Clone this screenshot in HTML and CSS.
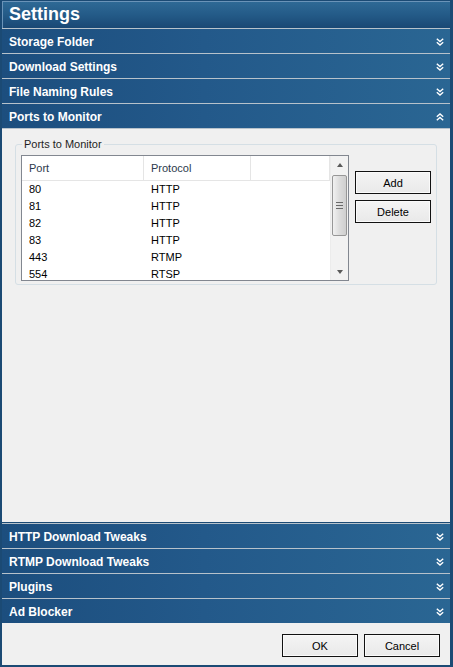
FILE: index.html
```html
<!DOCTYPE html>
<html lang="en">
<head>
    <meta charset="UTF-8">
    <title>Settings</title>
    <link rel="stylesheet" href="styles.css">
</head>
<body>
    <div class="window">
        <div class="titlebar">Settings</div>

        <div class="section">
            <span>Storage Folder</span>
            <svg class="chev" width="8" height="8" viewBox="0 0 8 8"><polyline points="0.8,0.8 4,3.6 7.2,0.8"/><polyline points="0.8,4.2 4,7 7.2,4.2"/></svg>
        </div>
        <div class="section">
            <span>Download Settings</span>
            <svg class="chev" width="8" height="8" viewBox="0 0 8 8"><polyline points="0.8,0.8 4,3.6 7.2,0.8"/><polyline points="0.8,4.2 4,7 7.2,4.2"/></svg>
        </div>
        <div class="section">
            <span>File Naming Rules</span>
            <svg class="chev" width="8" height="8" viewBox="0 0 8 8"><polyline points="0.8,0.8 4,3.6 7.2,0.8"/><polyline points="0.8,4.2 4,7 7.2,4.2"/></svg>
        </div>
        <div class="section">
            <span>Ports to Monitor</span>
            <svg class="chev" width="8" height="8" viewBox="0 0 8 8"><polyline points="0.8,3.8 4,1 7.2,3.8"/><polyline points="0.8,7.2 4,4.4 7.2,7.2"/></svg>
        </div>

        <div class="panel">
            <fieldset class="group">
                <legend>Ports to Monitor</legend>
                <div class="group-body">
                    <div class="listview">
                        <div class="lv-main">
                            <div class="lv-head">
                                <span class="col-port">Port</span>
                                <span class="col-proto">Protocol</span>
                                <span class="col-rest"></span>
                            </div>
                            <div class="lv-row"><span class="col-port">80</span><span class="col-proto">HTTP</span></div>
                            <div class="lv-row"><span class="col-port">81</span><span class="col-proto">HTTP</span></div>
                            <div class="lv-row"><span class="col-port">82</span><span class="col-proto">HTTP</span></div>
                            <div class="lv-row"><span class="col-port">83</span><span class="col-proto">HTTP</span></div>
                            <div class="lv-row"><span class="col-port">443</span><span class="col-proto">RTMP</span></div>
                            <div class="lv-row"><span class="col-port">554</span><span class="col-proto">RTSP</span></div>
                        </div>
                        <div class="vscroll">
                            <div class="arrow"><span class="tri-up"></span></div>
                            <div class="track">
                                <div class="thumb"><span class="grip"></span></div>
                            </div>
                            <div class="arrow"><span class="tri-down"></span></div>
                        </div>
                    </div>
                    <div class="side-buttons">
                        <button class="btn">Add</button>
                        <button class="btn">Delete</button>
                    </div>
                </div>
            </fieldset>
        </div>

        <div class="section first-bottom">
            <span>HTTP Download Tweaks</span>
            <svg class="chev" width="8" height="8" viewBox="0 0 8 8"><polyline points="0.8,0.8 4,3.6 7.2,0.8"/><polyline points="0.8,4.2 4,7 7.2,4.2"/></svg>
        </div>
        <div class="section">
            <span>RTMP Download Tweaks</span>
            <svg class="chev" width="8" height="8" viewBox="0 0 8 8"><polyline points="0.8,0.8 4,3.6 7.2,0.8"/><polyline points="0.8,4.2 4,7 7.2,4.2"/></svg>
        </div>
        <div class="section">
            <span>Plugins</span>
            <svg class="chev" width="8" height="8" viewBox="0 0 8 8"><polyline points="0.8,0.8 4,3.6 7.2,0.8"/><polyline points="0.8,4.2 4,7 7.2,4.2"/></svg>
        </div>
        <div class="section">
            <span>Ad Blocker</span>
            <svg class="chev" width="8" height="8" viewBox="0 0 8 8"><polyline points="0.8,0.8 4,3.6 7.2,0.8"/><polyline points="0.8,4.2 4,7 7.2,4.2"/></svg>
        </div>

        <div class="footer">
            <button class="btn">OK</button>
            <button class="btn">Cancel</button>
        </div>
    </div>
</body>
</html>
```

FILE: styles.css
```css
body {
    margin: 0;
    font-family: "Liberation Sans", Arial, sans-serif;
    background: #f0f0f0;
}

.window {
    width: 453px;
    height: 667px;
    box-sizing: border-box;
    display: flex;
    flex-direction: column;
    border-style: solid;
    border-color: #1b4a74;
    border-width: 1px 3px 2px 2px;
    background: #f0f0f0;
}

.titlebar {
    height: 27px;
    line-height: 27px;
    padding-left: 7px;
    color: #fff;
    font-size: 18px;
    font-weight: bold;
    background: linear-gradient(to bottom, #2f6a96, #245b88 50%, #1a4874);
    box-shadow: inset 1px 1px 0 #6a93b8;
}

.section {
    flex: none;
    display: flex;
    align-items: center;
    justify-content: space-between;
    padding: 1px 6px 0 7px;
    box-sizing: border-box;
    height: 25px;
    border-top: 1px solid #b7c2cb;
    background: linear-gradient(to right, #1c4e7e, #23598a 45%, #2a6693);
    color: #fff;
    font-size: 12px;
    font-weight: bold;
}

.section.first-bottom {
    box-shadow: 0 -1px 0 #1b4a74;
    margin-top: 1px;
}

.chev {
    fill: none;
    stroke: #fff;
    stroke-width: 1.4;
}

.panel {
    flex: 1;
    border-top: 1px solid #b7c2cb;
    background: #f0f0f0;
}

.group {
    margin: 9px 13px 0 13px;
    padding: 4px 5px 3px 5px;
    border: 1px solid #d5dfe5;
    border-radius: 3px;
    min-width: 0;
}

.group legend {
    padding: 0 2px;
    margin-left: 1px;
    font-size: 11px;
    line-height: 13px;
    color: #1e1e1e;
}

.group-body {
    display: flex;
    gap: 6px;
}

.listview {
    width: 328px;
    height: 126px;
    box-sizing: border-box;
    border: 1px solid #828790;
    background: #fff;
    display: flex;
}

.lv-main {
    flex: 1;
    overflow: hidden;
    font-size: 11px;
}

.lv-head {
    display: flex;
    height: 24px;
    line-height: 24px;
    border-bottom: 1px solid #e5e5e5;
    color: #2c3a4c;
}

.lv-head span {
    border-right: 1px solid #e5e5e5;
}

.lv-head .col-rest {
    width: 80px;
}

.col-port {
    width: 114px;
    padding-left: 7px;
    flex: none;
}

.col-proto {
    width: 99px;
    padding-left: 7px;
    flex: none;
}

.lv-row {
    display: flex;
    height: 17px;
    line-height: 17px;
    color: #000;
}

.lv-row .col-port {
    width: 115px;
}

.vscroll {
    width: 17px;
    flex: none;
    display: flex;
    flex-direction: column;
    background: #f2f2f2;
    border-left: 1px solid #ececec;
}

.arrow {
    height: 17px;
    display: flex;
    align-items: center;
    justify-content: center;
}

.tri-up {
    border-left: 3.5px solid transparent;
    border-right: 3.5px solid transparent;
    border-bottom: 4px solid #5a5a5a;
}

.tri-down {
    border-left: 3.5px solid transparent;
    border-right: 3.5px solid transparent;
    border-top: 4px solid #5a5a5a;
}

.track {
    flex: 1;
    padding-top: 2px;
}

.thumb {
    height: 59px;
    margin: 0 1px;
    border: 1px solid #979797;
    border-radius: 2px;
    background: linear-gradient(to right, #f1f1f1, #dcdcdc 50%, #cfcfcf);
    display: flex;
    align-items: center;
    justify-content: center;
}

.grip {
    width: 7px;
    height: 5px;
    border-top: 1px solid #6a6a6a;
    border-bottom: 1px solid #6a6a6a;
    background: linear-gradient(to bottom, transparent 2px, #6a6a6a 2px, #6a6a6a 3px, transparent 3px);
}

.side-buttons {
    display: flex;
    flex-direction: column;
    gap: 6px;
    padding-top: 16px;
}

.btn {
    width: 76px;
    height: 23px;
    padding: 0;
    border: 1px solid #111;
    border-radius: 0;
    background: linear-gradient(to bottom, #f4f4f4, #e9e9e9);
    box-shadow: inset 0 0 0 1px #fafafa;
    font-family: "Liberation Sans", Arial, sans-serif;
    font-size: 11px;
    font-weight: normal;
    color: #000;
}

.footer {
    height: 42px;
    flex: none;
    display: flex;
    justify-content: flex-end;
    gap: 6px;
    padding: 11px 10px 0 0;
    box-sizing: border-box;
    background: #f0f0f0;
}
```
